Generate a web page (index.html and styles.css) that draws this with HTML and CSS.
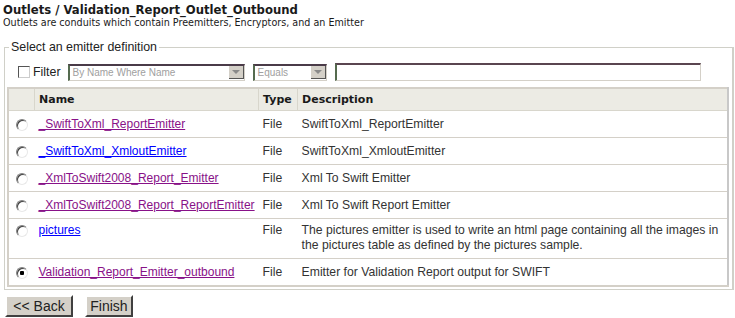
FILE: index.html
```html
<!DOCTYPE html>
<html lang="en">
<head>
    <meta charset="UTF-8">
    <title>Outlets / Validation_Report_Outlet_Outbound</title>
    <link rel="stylesheet" href="styles.css">
</head>
<body>
    <h1 class="page-title">Outlets / Validation_Report_Outlet_Outbound</h1>
    <p class="page-sub">Outlets are conduits which contain Preemitters, Encryptors, and an Emitter</p>

    <fieldset class="picker">
        <legend>Select an emitter definition</legend>

        <div class="filter-row">
            <label class="filter-check"><input type="checkbox"> Filter</label>
            <div class="fake-select sel-field"><span>By Name Where Name</span><i class="arrow"></i></div>
            <div class="fake-select sel-op"><span>Equals</span><i class="arrow"></i></div>
            <input type="text" class="filter-text">
        </div>

        <table class="grid">
            <thead>
                <tr>
                    <th class="col-pick"></th>
                    <th class="col-name">Name</th>
                    <th class="col-type">Type</th>
                    <th>Description</th>
                </tr>
            </thead>
            <tbody>
                <tr>
                    <td class="col-pick"><input type="radio" name="em"></td>
                    <td><a href="#" class="visited">_SwiftToXml_ReportEmitter</a></td>
                    <td>File</td>
                    <td>SwiftToXml_ReportEmitter</td>
                </tr>
                <tr>
                    <td class="col-pick"><input type="radio" name="em"></td>
                    <td><a href="#">_SwiftToXml_XmloutEmitter</a></td>
                    <td>File</td>
                    <td>SwiftToXml_XmloutEmitter</td>
                </tr>
                <tr>
                    <td class="col-pick"><input type="radio" name="em"></td>
                    <td><a href="#" class="visited">_XmlToSwift2008_Report_Emitter</a></td>
                    <td>File</td>
                    <td>Xml To Swift Emitter</td>
                </tr>
                <tr>
                    <td class="col-pick"><input type="radio" name="em"></td>
                    <td><a href="#" class="visited">_XmlToSwift2008_Report_ReportEmitter</a></td>
                    <td>File</td>
                    <td>Xml To Swift Report Emitter</td>
                </tr>
                <tr class="top">
                    <td class="col-pick"><input type="radio" name="em"></td>
                    <td><a href="#">pictures</a></td>
                    <td>File</td>
                    <td>The pictures emitter is used to write an html page containing all the images in the pictures table as defined by the pictures sample.</td>
                </tr>
                <tr>
                    <td class="col-pick"><input type="radio" name="em" checked></td>
                    <td><a href="#" class="visited">Validation_Report_Emitter_outbound</a></td>
                    <td>File</td>
                    <td>Emitter for Validation Report output for SWIFT</td>
                </tr>
            </tbody>
        </table>
    </fieldset>

    <div class="actions">
        <button class="btn btn-back">&lt;&lt; Back</button>
        <button class="btn btn-finish">Finish</button>
    </div>
</body>
</html>
```

FILE: styles.css
```css
body {
    margin: 0;
    padding: 3px 3px 0 3px;
    font-family: "Liberation Sans", Arial, sans-serif;
    font-size: 12px;
    color: #222;
    background-color: #fff;
}

.page-title {
    margin: 0;
    font-family: "DejaVu Sans", Verdana, sans-serif;
    font-size: 11.65px;
    font-weight: bold;
    color: #1a1a1a;
    line-height: 14px;
}

.page-sub {
    margin: 0;
    font-family: "DejaVu Sans", Verdana, sans-serif;
    font-size: 9.6px;
    color: #1a1a1a;
    line-height: 12px;
}

.picker {
    margin: 11px 0 0 1px;
    padding: 4px 2px 2px 2px;
    border: 1px solid #d0d0c8;
    border-right: 2px solid #d0d0c8;
    width: 723px;
}

.picker legend {
    font-size: 12.4px;
    color: #222;
    padding: 0 2px;
    margin-left: 2px;
}

.filter-row {
    display: flex;
    align-items: center;
    height: 18px;
    margin: 5px 0 6px 10px;
}

.filter-check {
    display: flex;
    align-items: center;
    font-size: 12.4px;
    color: #222;
    margin-right: 7px;
}

.filter-check input {
    width: 12px;
    height: 12px;
    margin: 0 3px 0 1px;
    appearance: none;
    border: 1px solid #555;
    border-right-color: #ccc;
    border-bottom-color: #ccc;
    background: #fff;
}

.fake-select {
    display: flex;
    align-items: center;
    border: 1px solid #d4d0c8;
    border-top: 2px solid #4a3b48;
    border-left: 2px solid #556b4f;
    background: #fff;
    margin-right: 8px;
    box-sizing: border-box;
    height: 17px;
}

.fake-select span {
    flex: 1;
    padding-left: 3px;
    font-size: 10px;
    color: #a0a0a0;
}

.fake-select .arrow {
    width: 15px;
    height: 13px;
    background: #d4d0c8;
    border-right: 1px solid #555;
    border-bottom: 1px solid #555;
    box-sizing: border-box;
    position: relative;
}

.fake-select .arrow::after {
    content: "";
    position: absolute;
    left: 3px;
    top: 4px;
    border-left: 4px solid transparent;
    border-right: 4px solid transparent;
    border-top: 4px solid #8a8a8a;
}

.sel-field {
    width: 177px;
}

.sel-op {
    width: 74px;
}

.filter-text {
    width: 366px;
    height: 18px;
    padding: 0;
    box-sizing: border-box;
    border: 1px solid #d4d0c8;
    border-top: 2px solid #5a4550;
    border-left: 2px solid #556b4f;
}

.grid {
    width: 722px;
    border-collapse: collapse;
    border: 2px solid #d4d0c8;
    border-right-color: #c8c8c8;
}

.grid th {
    background-color: #ecebe4;
    font-family: "DejaVu Sans", Verdana, sans-serif;
    font-size: 11px;
    font-weight: bold;
    text-align: left;
    height: 21px;
    padding: 0 4px;
    color: #1a1a1a;
    border-left: 1px solid #d8d6cc;
    border-bottom: 1px solid #d8d6cc;
}

.grid td {
    height: 26px;
    padding: 0 4px;
    border-top: 1px solid #d4d0c8;
    color: #333;
    font-size: 12.2px;
}

.grid tr.top td {
    padding-top: 4px;
    padding-bottom: 5px;
    vertical-align: top;
    line-height: 15px;
}

.grid .col-pick {
    width: 17px;
    text-align: center;
}

.grid .col-name {
    width: 212px;
}

.grid .col-type {
    width: 30px;
}

.grid td.col-pick input {
    appearance: none;
    margin: 0;
    width: 12px;
    height: 12px;
    vertical-align: middle;
    border-radius: 50%;
    border: 1px solid;
    border-color: #808080 #e8e8e8 #e8e8e8 #808080;
    box-shadow: inset 1px 1px 0 #404040;
    background: #fff;
}

.grid td.col-pick input:checked {
    background: radial-gradient(circle, #000 0, #000 2px, #fff 2.5px);
}

.grid a {
    color: #0000ff;
    font-size: 12px;
}

.grid a.visited {
    color: #881188;
}

.actions {
    display: flex;
    gap: 12px;
    margin: 5px 0 0 2px;
}

.btn {
    font-family: "Liberation Sans", Arial, sans-serif;
    font-size: 14px;
    color: #222;
    background-color: #d4d0c8;
    border: 2px solid;
    border-color: #fff #404040 #404040 #fff;
    padding: 0;
    height: 22px;
}

.btn-back {
    width: 68px;
}

.btn-finish {
    width: 48px;
}
```
